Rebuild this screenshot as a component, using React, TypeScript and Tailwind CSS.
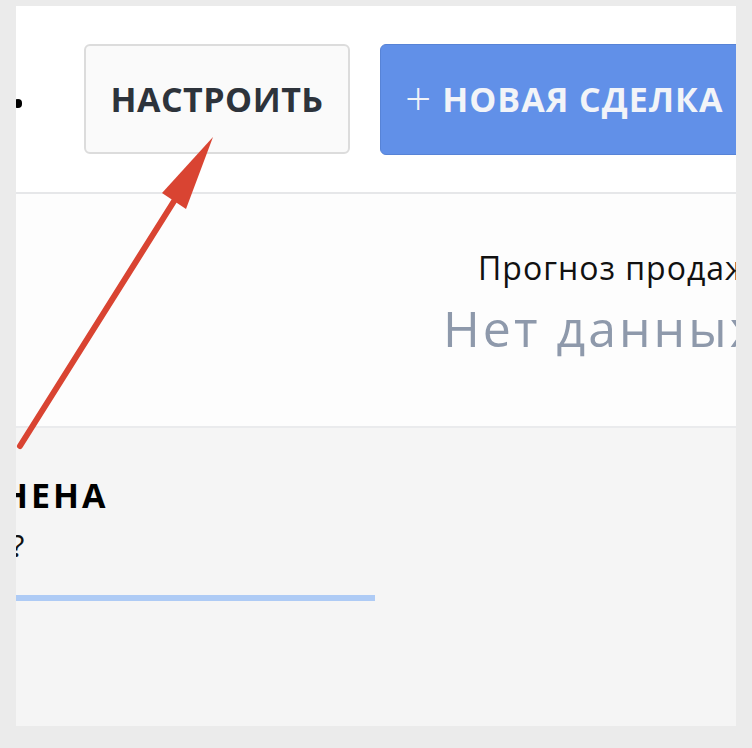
import React from "react";

export default function App() {
  const font = { fontFamily: '"Open Sans", "Noto Sans", sans-serif' };
  return (
    <div className="w-[752px] h-[748px] bg-[#ebebeb] pt-[6px] pl-[16px] relative" style={font}>
      <div className="w-[720px] h-[720px] overflow-hidden flex flex-col">
        {/* Top bar */}
        <div className="h-[186px] bg-white flex items-center shrink-0">
          <div className="w-[8px] h-[9px] rounded-full bg-black -ml-[2px] mt-[8px] shrink-0" />
          <button className="ml-[62px] w-[266px] h-[110px] shrink-0 rounded-[6px] border-2 border-[#dcdcdc] bg-[#fafafa] text-[#2d333b] font-bold text-[34px] tracking-[0.5px] leading-none flex items-center justify-center">
            НАСТРОИТЬ
          </button>
          <button className="ml-[30px] w-[420px] h-[111px] shrink-0 rounded-[6px] border border-[#5783d6] bg-[#6190e8] text-[#f2f4f8] font-bold text-[34px] tracking-[1px] leading-none flex items-center pl-[24px]">
            <span className="font-light text-[46px] mr-[10px] -mt-[5px]">+</span>
            НОВАЯ СДЕЛКА
          </button>
        </div>
        <div className="h-[2px] bg-[#e6e7e9] shrink-0" />
        {/* Middle */}
        <div className="h-[232px] bg-[#fdfdfd] shrink-0 pl-[427px] pt-[55px] whitespace-nowrap">
          <div className="text-[32px] leading-[38px] tracking-[1px] text-[#111] ml-[35px]">Прогноз продаж</div>
          <div className="text-[50px] leading-[50px] tracking-[3px] text-[#8e99ab] mt-[16px]">Нет данных</div>
        </div>
        <div className="h-[2px] bg-[#eaebed] shrink-0" />
        {/* Bottom */}
        <div className="flex-1 bg-[#f5f5f5] whitespace-nowrap">
          <div className="-ml-[14px] mt-[47px] text-[34px] leading-[40px] font-bold tracking-[3px] text-black">НЕНА</div>
          <div className="-ml-[5px] mt-[13px] text-[31px] leading-[34px] text-[#111]">?</div>
          <div className="w-[359px] h-[6px] bg-[#aecbf5] mt-[33px]" />
        </div>
      </div>
      {/* Annotation arrow */}
      <svg className="absolute left-0 top-0 pointer-events-none" width="752" height="748" viewBox="0 0 752 748">
        <line x1="20" y1="446" x2="176" y2="198" stroke="#d94432" strokeWidth="6" strokeLinecap="round" />
        <polygon points="213,137 162,193 186,209" fill="#d94432" />
      </svg>
    </div>
  );
}
